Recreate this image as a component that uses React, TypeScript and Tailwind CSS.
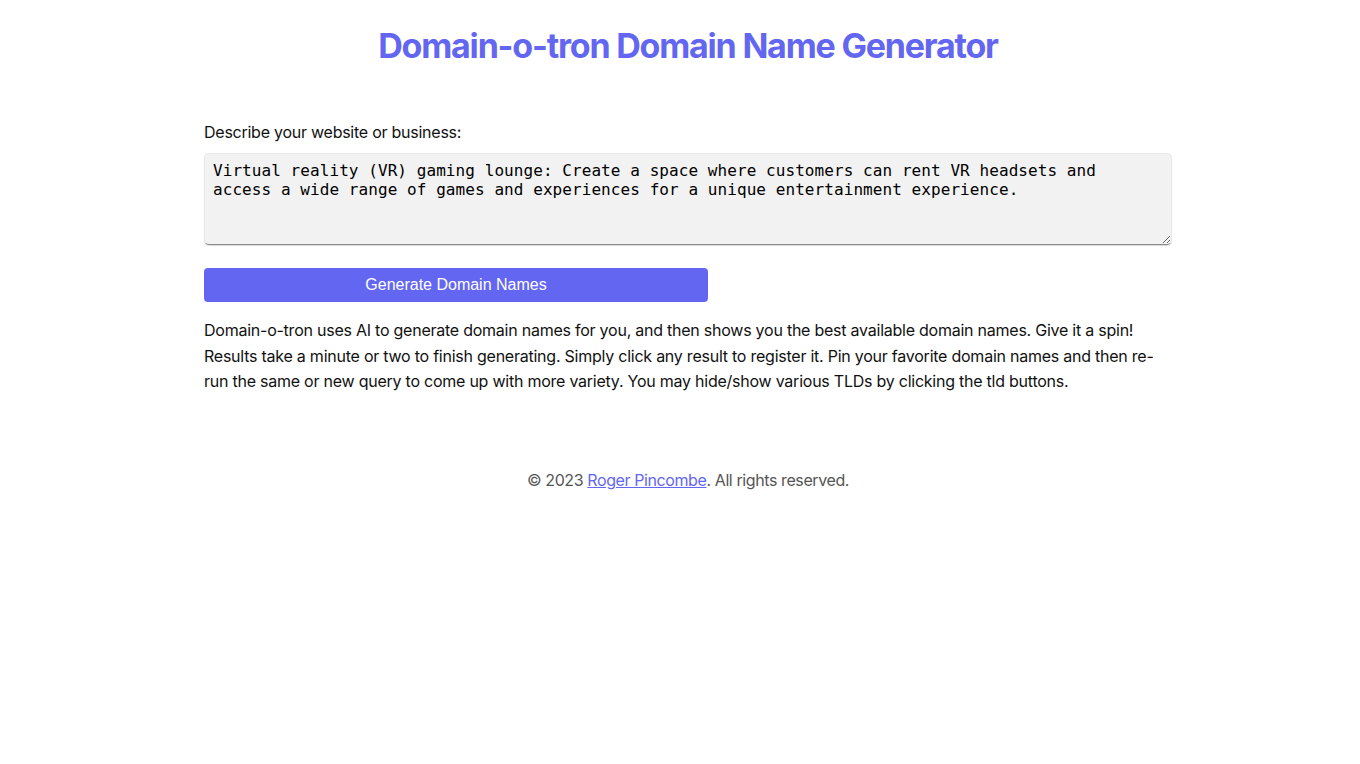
import React from "react";

export default function App() {
  return (
    <div className="min-h-[764px] bg-white pl-4">
      <div className="mx-auto w-[968px] pt-[26px] font-['Inter',sans-serif]">
        <h1 className="text-center text-[34px] leading-[40px] font-bold tracking-[-1.2px] text-[#6366f1]">
          Domain-o-tron Domain Name Generator
        </h1>
        <label className="mt-[54px] block text-[16px] leading-[24px] tracking-[-0.25px] text-[#111]">
          Describe your website or business:
        </label>
        <textarea
          className="mt-[9px] block h-[92px] w-full resize-y rounded-[5px] border border-[#e8e8e8] border-b-[#8a8a8a] bg-[#f2f2f2] pl-[8px] pr-[16px] pt-[7px] font-['DejaVu_Sans_Mono',monospace] text-[16px] leading-[19px] tracking-[0.07px] text-black shadow-[0_1px_1px_rgba(0,0,0,0.15)] outline-none"
          defaultValue="Virtual reality (VR) gaming lounge: Create a space where customers can rent VR headsets and access a wide range of games and experiences for a unique entertainment experience."
        />
        <button className="mt-[23px] block h-[34px] w-[504px] rounded-[4px] bg-[#6366f1] font-['Liberation_Sans',Arial,sans-serif] text-[16px] text-white">
          Generate Domain Names
        </button>
        <p className="mt-[16px] text-[16px] leading-[25.6px] tracking-[-0.24px] text-[#111]">
          Domain-o-tron uses AI to generate domain names for you, and then shows you the best available domain names. Give it a spin! Results take a minute or two to finish generating. Simply click any result to register it. Pin your favorite domain names and then re-run the same or new query to come up with more variety. You may hide/show various TLDs by clicking the tld buttons.
        </p>
        <footer className="mt-[73px] text-center text-[16px] leading-[24px] tracking-[-0.4px] text-[#555]">
          © 2023{" "}
          <a href="#" className="text-[#6366f1] underline">
            Roger Pincombe
          </a>
          . All rights reserved.
        </footer>
      </div>
    </div>
  );
}
